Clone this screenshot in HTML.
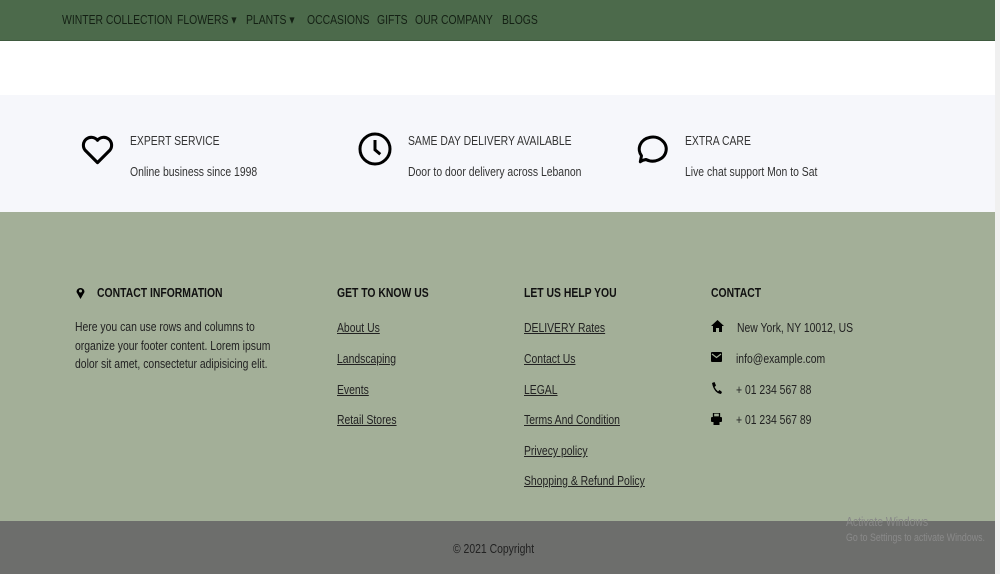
<!DOCTYPE html>
<html><head><meta charset="utf-8"><style>
*{margin:0;padding:0;box-sizing:border-box}
body{width:1000px;height:574px;overflow:hidden;background:#fff;font-family:"Liberation Sans",sans-serif;color:#222;position:relative}
.nav{position:absolute;left:0;top:0;width:995px;height:41px;background:#4c6a4b;border-bottom:1px solid #3f5a3f}
.nav span,.t,.h,.a,.p{transform:scaleX(.8);transform-origin:0 0;font-size:13px}
.nav span{position:absolute;top:12px;color:#142014;white-space:nowrap}
.feat{position:absolute;left:0;top:95px;width:995px;height:117px;background:#f6f7fb}
.t{position:absolute;color:#333;white-space:nowrap}
.foot{position:absolute;left:0;top:212px;width:995px;height:309px;background:#a3af98}
.h{position:absolute;font-weight:bold;color:#111;white-space:nowrap}
.a{position:absolute;color:#222;text-decoration:underline;white-space:nowrap}
.p{position:absolute;color:#222;line-height:18.5px;white-space:nowrap}
.bot{position:absolute;left:0;top:521px;width:995px;height:53px;background:#6d6e6c}
.sb{position:absolute;left:995px;top:0;width:5px;height:574px;background:#f0f0f0}
</style></head><body>
<div class="nav">
<span style="left:62px">WINTER COLLECTION</span>
<span style="left:177px">FLOWERS ▾</span>
<span style="left:246px">PLANTS ▾</span>
<span style="left:307px">OCCASIONS</span>
<span style="left:377px">GIFTS</span>
<span style="left:415px">OUR COMPANY</span>
<span style="left:502px">BLOGS</span>
</div>
<div class="feat">
<svg style="position:absolute;left:79px;top:36px" width="37" height="37" viewBox="0 0 24 24"><path d="M12 20.5 4 12.5A4.8 4.8 0 0 1 12 6a4.8 4.8 0 0 1 8 6.5z" fill="none" stroke="#000" stroke-width="2" stroke-linejoin="round"/></svg>
<div class="t" style="left:130px;top:38px">EXPERT SERVICE</div>
<div class="t" style="left:130px;top:69px">Online business since 1998</div>
<svg style="position:absolute;left:357px;top:36px" width="36" height="36" viewBox="0 0 24 24"><circle cx="12" cy="12" r="10" fill="none" stroke="#000" stroke-width="2"/><path d="M12 6v6.5l3.5 3" fill="none" stroke="#000" stroke-width="2"/></svg>
<div class="t" style="left:408px;top:38px">SAME DAY DELIVERY AVAILABLE</div>
<div class="t" style="left:408px;top:69px">Door to door delivery across Lebanon</div>
<svg style="position:absolute;left:634px;top:36px" width="36" height="36" viewBox="0 0 24 24"><path d="M6 19.5 4.2 20.5 5 16.5A9 8 0 1 1 8 19z" fill="none" stroke="#000" stroke-width="2" stroke-linejoin="round"/></svg>
<div class="t" style="left:685px;top:38px">EXTRA CARE</div>
<div class="t" style="left:685px;top:69px">Live chat support Mon to Sat</div>
</div>
<div class="foot">
<svg style="position:absolute;left:75px;top:75px" width="11" height="12" viewBox="0 0 10 12"><path d="M5 12 1 5A4 4 0 1 1 9 5z" fill="#000"/><circle cx="5" cy="4" r="1.5" fill="#a3af98"/></svg>
<div class="h" style="left:97px;top:73px">CONTACT INFORMATION</div>
<div class="p" style="left:75px;top:106px">Here you can use rows and columns to<br>organize your footer content. Lorem ipsum<br>dolor sit amet, consectetur adipisicing elit.</div>
<div class="h" style="left:337px;top:73px">GET TO KNOW US</div>
<div class="a" style="left:337px;top:108px">About Us</div>
<div class="a" style="left:337px;top:139px">Landscaping</div>
<div class="a" style="left:337px;top:170px">Events</div>
<div class="a" style="left:337px;top:200px">Retail Stores</div>
<div class="h" style="left:524px;top:73px">LET US HELP YOU</div>
<div class="a" style="left:524px;top:108px">DELIVERY Rates</div>
<div class="a" style="left:524px;top:139px">Contact Us</div>
<div class="a" style="left:524px;top:170px">LEGAL</div>
<div class="a" style="left:524px;top:200px">Terms And Condition</div>
<div class="a" style="left:524px;top:231px">Privecy policy</div>
<div class="a" style="left:524px;top:261px">Shopping &amp; Refund Policy</div>
<div class="h" style="left:711px;top:73px">CONTACT</div>
<svg style="position:absolute;left:711px;top:108px" width="13" height="12" viewBox="0 0 13 12"><path d="M6.5 0 13 6h-2v6H8V8H5v4H2V6H0z" fill="#000"/></svg>
<div class="t" style="left:737px;top:108px;color:#222">New York, NY 10012, US</div>
<svg style="position:absolute;left:711px;top:140px" width="11" height="10" viewBox="0 0 11 10"><rect width="11" height="10" rx="1" fill="#000"/><path d="M1 2l4.5 3.5L10 2" fill="none" stroke="#a3af98" stroke-width="1.2"/></svg>
<div class="t" style="left:736px;top:139px;color:#222">info@example.com</div>
<svg style="position:absolute;left:711px;top:170px" width="11" height="12" viewBox="0 0 11 12"><path d="M1 1 3.5 0 5 3.5 3.5 5Q5 8 7 9.5L8.5 8 11 10l-1 2Q3 11 1 1z" fill="#000"/></svg>
<div class="t" style="left:736px;top:170px;color:#222">+ 01 234 567 88</div>
<svg style="position:absolute;left:711px;top:201px" width="11" height="12" viewBox="0 0 11 12"><rect x="2.5" y="0" width="6" height="4" fill="none" stroke="#000" stroke-width="1.3"/><rect x="0" y="4" width="11" height="5" rx="1" fill="#000"/><rect x="2.5" y="8" width="6" height="4" fill="#000"/></svg>
<div class="t" style="left:736px;top:200px;color:#222">+ 01 234 567 89</div>
</div>
<div class="bot">
<div class="t" style="left:453px;top:20px;color:#222">© 2021 Copyright</div>
<div class="t" style="left:846px;top:-7px;color:#888">Activate Windows</div>
<div class="t" style="left:846px;top:11px;color:#8a8a8a;font-size:11px">Go to Settings to activate Windows.</div>
</div>
<div class="sb"></div>
</body></html>
